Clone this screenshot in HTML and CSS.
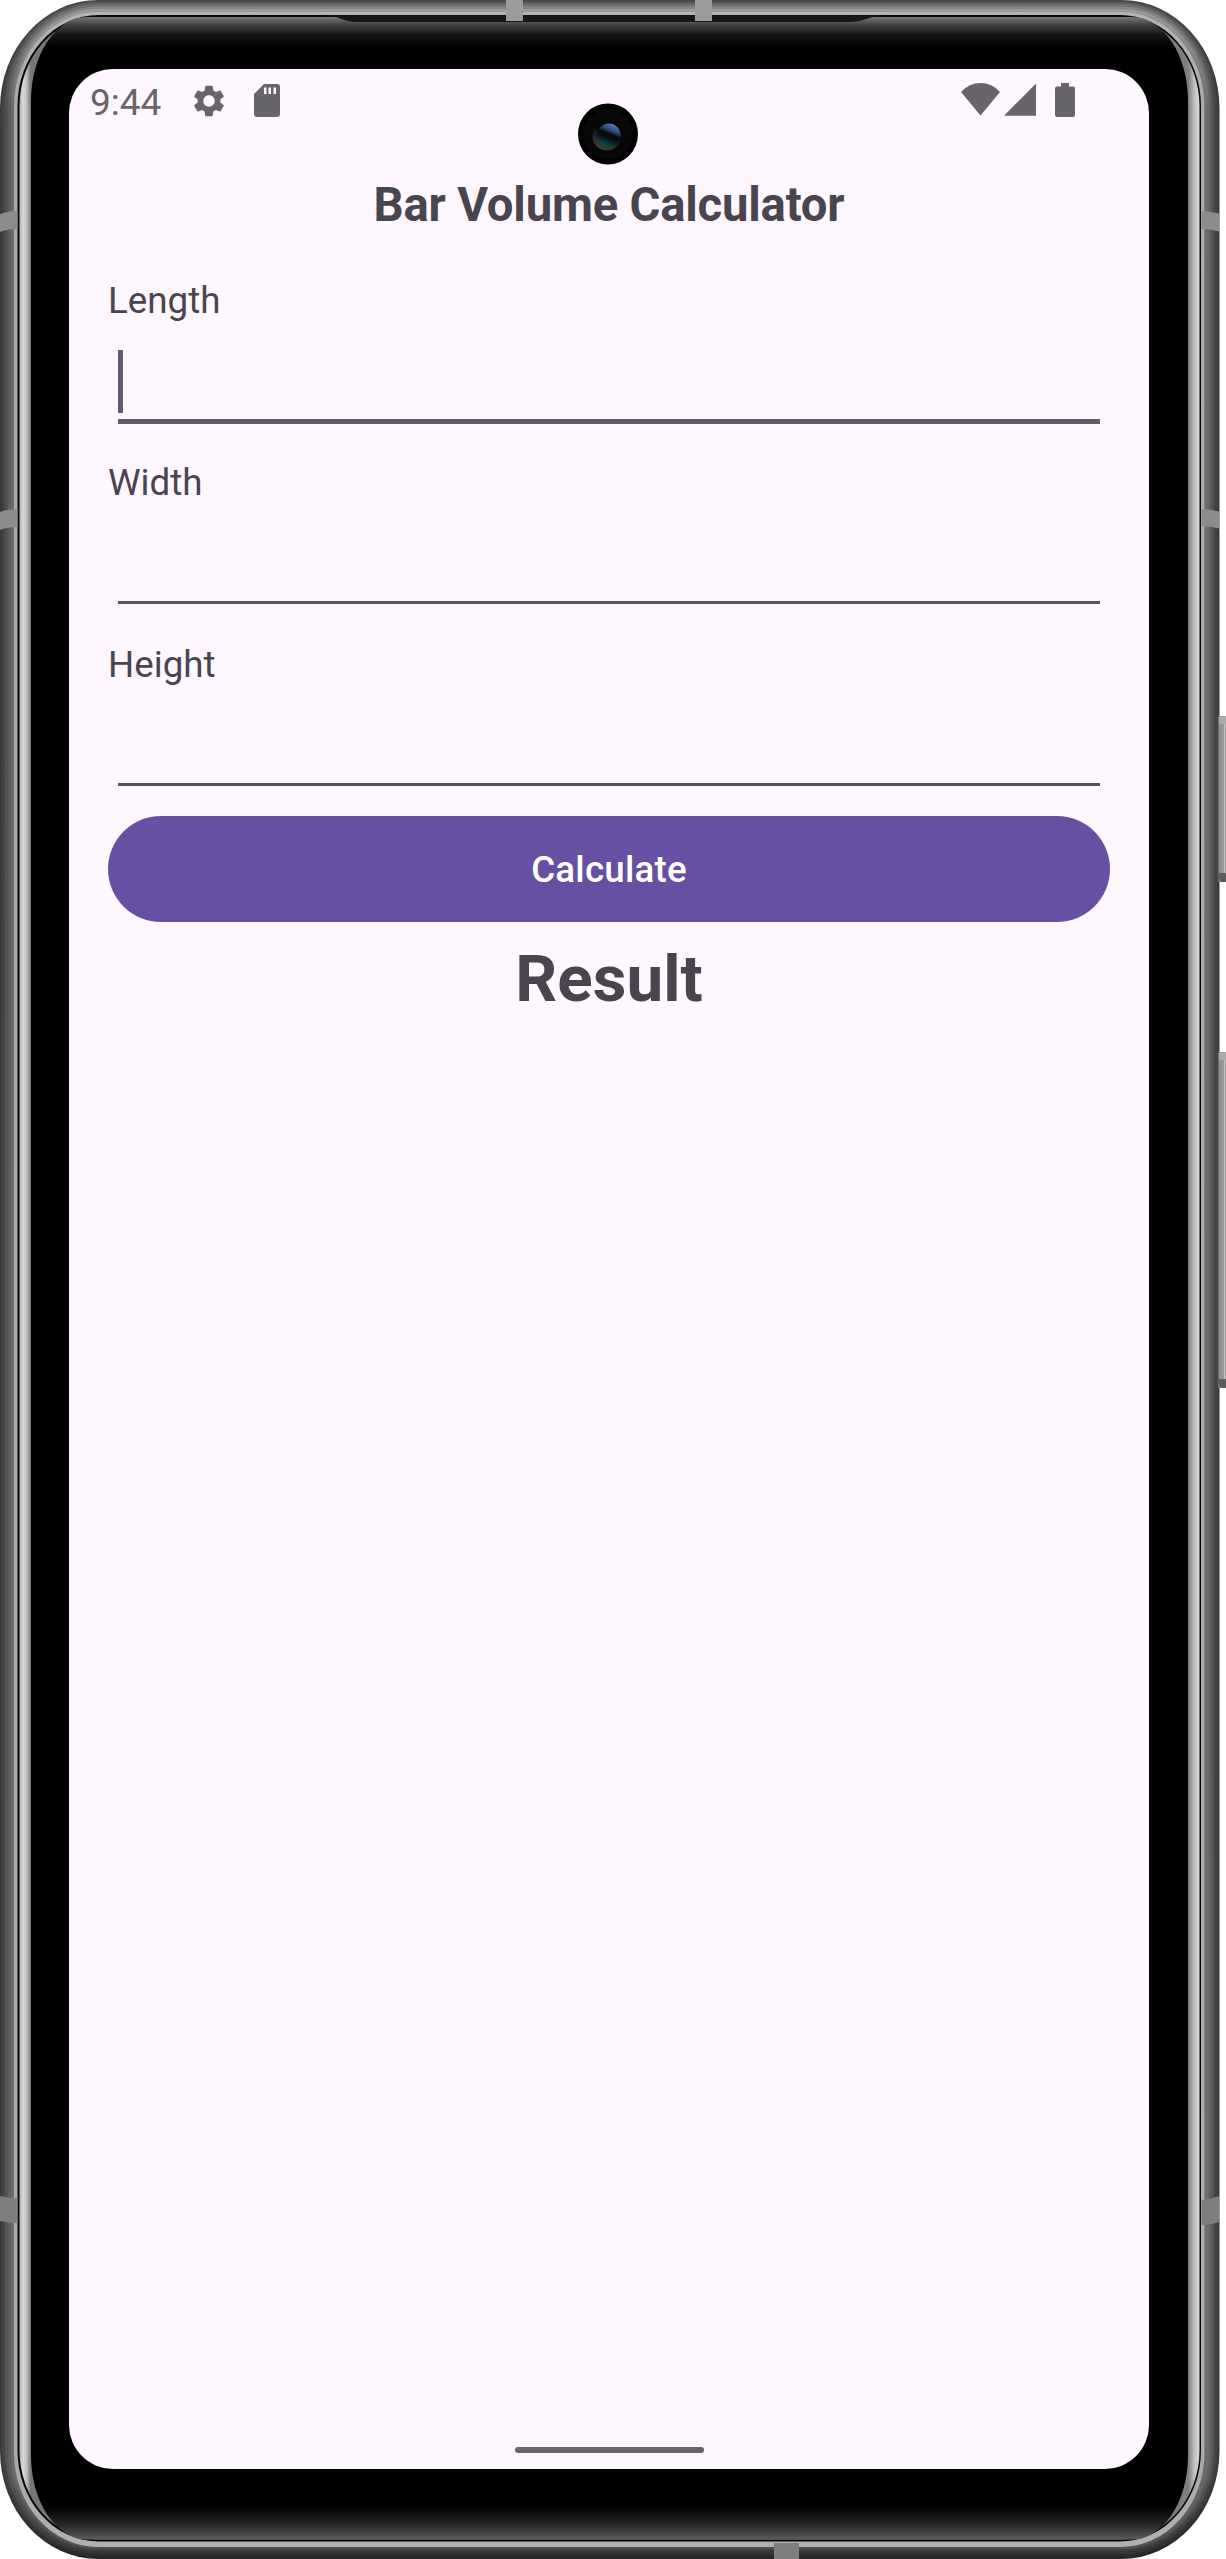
FILE: index.html
```html
<!DOCTYPE html>
<html lang="en">
<head>
<meta charset="utf-8">
<title>Bar Volume Calculator</title>
<link rel="stylesheet" href="styles.css">
</head>
<body>
<div class="device">
  <svg class="frame" width="1226" height="2559" viewBox="0 0 1226 2559" aria-hidden="true">
    <defs>
      <linearGradient id="r0" x2="0" y2="1"><stop offset="0" stop-color="#484848"/><stop offset=".04" stop-color="#3a3a3a"/><stop offset=".97" stop-color="#3a3a3a"/><stop offset="1" stop-color="#262626"/></linearGradient>
      <linearGradient id="r1" x2="0" y2="1"><stop offset="0" stop-color="#5c5c5c"/><stop offset=".04" stop-color="#444"/><stop offset=".97" stop-color="#444"/><stop offset="1" stop-color="#2c2c2c"/></linearGradient>
      <linearGradient id="r2" x2="0" y2="1"><stop offset="0" stop-color="#707070"/><stop offset=".04" stop-color="#505050"/><stop offset=".97" stop-color="#555"/><stop offset="1" stop-color="#353535"/></linearGradient>
      <linearGradient id="r3" x2="0" y2="1"><stop offset="0" stop-color="#858585"/><stop offset=".04" stop-color="#5e5e5e"/><stop offset=".97" stop-color="#606060"/><stop offset="1" stop-color="#404040"/></linearGradient>
      <linearGradient id="r4" x2="0" y2="1"><stop offset="0" stop-color="#9a9a9a"/><stop offset=".04" stop-color="#6a6a6a"/><stop offset=".97" stop-color="#6c6c6c"/><stop offset="1" stop-color="#505050"/></linearGradient>
      <linearGradient id="r5" x2="0" y2="1"><stop offset="0" stop-color="#b4b4b4"/><stop offset=".04" stop-color="#a8a8a8"/><stop offset=".97" stop-color="#aaa"/><stop offset="1" stop-color="#b0b0b0"/></linearGradient>
      <linearGradient id="band"><stop offset="0" stop-color="#b0b0b0"/><stop offset=".003" stop-color="#dadada"/><stop offset=".006" stop-color="#c0c0c0"/><stop offset=".0095" stop-color="#777"/><stop offset=".03" stop-color="#777"/><stop offset=".97" stop-color="#777"/><stop offset=".9905" stop-color="#808080"/><stop offset=".996" stop-color="#c4c4c4"/><stop offset="1" stop-color="#d8d8d8"/></linearGradient>
      <linearGradient id="glass" x2="0" y2="1"><stop offset="0" stop-color="#777"/><stop offset=".003" stop-color="#444"/><stop offset=".007" stop-color="#161616"/><stop offset=".012" stop-color="#000"/><stop offset=".987" stop-color="#000"/><stop offset=".994" stop-color="#262626"/><stop offset="1" stop-color="#5c5c5c"/></linearGradient>
      <linearGradient id="key"><stop offset="0" stop-color="#333"/><stop offset=".25" stop-color="#8c8c8c"/><stop offset=".75" stop-color="#999"/><stop offset=".85" stop-color="#ccc"/><stop offset="1" stop-color="#777"/></linearGradient>
    </defs>
    <rect width="1219.5" height="2559" rx="98" ry="108" fill="url(#r0)"/>
    <rect x="2" y="2" width="1215" height="2554.500" rx="96" ry="106" fill="url(#r1)"/>
    <rect x="5" y="4" width="1209" height="2550" rx="93" ry="103" fill="url(#r2)"/>
    <rect x="8" y="6.500" width="1203.500" height="2544.500" rx="90" ry="100" fill="url(#r3)"/>
    <rect x="11" y="9" width="1198" height="2540" rx="87" ry="97" fill="url(#r4)"/>
    <rect x="14" y="12" width="1190.500" height="2535" rx="84" ry="94" fill="url(#r5)"/>
    <rect x="17.500" y="15" width="1183.500" height="2526.500" rx="81" ry="91" fill="#080808"/>
    <rect x="19.500" y="17" width="1180" height="2522.500" rx="79" ry="89" fill="url(#band)"/>
    <rect x="31" y="17" width="1157" height="2522.500" rx="56" ry="84" fill="url(#glass)"/>
    <path d="M326 15.500h558c-14 0-20 6.500-34 6.500H356c-12 0-18-6.500-30-6.500z" fill="#161616"/>
    <g fill="#8c8c8c">
      <path d="M506 0h17v21h-17zM695 0h17v21h-17z" fill="#9c9c9c"/>
      <path d="M0 214q8-3 17.500-3v18q-10 0-17.500 3zM0 512q8-3 17.500-3v18q-10 0-17.500 3zM1201.500 211q9 0 17.500 2.500v18q-8-2.500-17.500-2.500zM1201.500 509q9 0 17.500 2.500v17q-8-2.500-17.500-2.500z"/>
      <path d="M0 2196q8 2 17.500 2v25q-10 0-17.500-2zM1201.500 2200q9-.5 17.500-4v26q-8 3-17.500 3zM774 2543h25v16h-25z" fill="#7e7e7e"/>
    </g>
    <rect x="1217" y="716" width="9" height="166" fill="url(#key)"/>
    <rect x="1217" y="1052" width="9" height="336" fill="url(#key)"/>
    <path d="M1219 717h7v7h-7zM1219 1053h7v7h-7z" fill="#aaa"/>
    <path d="M1217 873h9v9h-6zM1217 1379h9v9h-6z" fill="#5c5c5c"/>
  </svg>
  <main class="screen">
    <header class="status">
      <span class="time">9:44</span>
      <svg class="gear" width="38" height="38" viewBox="0 0 24 24"><path d="M19.140 12.940c.04-.3.060-.61.060-.94 0-.32-.02-.64-.07-.94l2.030-1.580c.18-.14.230-.41.120-.61l-1.920-3.320c-.12-.22-.37-.29-.59-.22l-2.390.96c-.5-.38-1.030-.7-1.620-.94l-.36-2.540c-.04-.24-.24-.41-.48-.41h-3.840c-.24 0-.43.17-.47.41l-.36 2.540c-.59.24-1.130.57-1.620.94l-2.390-.96c-.22-.08-.47 0-.59.22L2.740 8.870c-.12.210-.08.470.12.610l2.030 1.580c-.05.3-.09.630-.09.940s.02.640.07.940l-2.030 1.580c-.18.140-.23.410-.12.610l1.920 3.320c.12.220.37.290.59.220l2.390-.96c.5.380 1.030.7 1.620.94l.36 2.540c.05.240.24.410.48.410h3.840c.24 0 .44-.17.470-.41l.36-2.540c.59-.24 1.130-.56 1.620-.94l2.390.96c.22.080.47 0 .59-.22l1.920-3.320c.12-.22.070-.47-.12-.61l-2.010-1.580zM12 15.600c-1.980 0-3.600-1.620-3.600-3.600s1.620-3.600 3.600-3.600 3.600 1.620 3.600 3.600-1.620 3.600-3.600 3.600z"/></svg>
      <svg class="card" width="26" height="33" viewBox="0 0 26 33"><path fill-rule="evenodd" d="M10 0h13a3 3 0 0 1 3 3v27a3 3 0 0 1-3 3H3a3 3 0 0 1-3-3V10zM10 3.500v6.500h2.500V3.500zM14.500 3.500v6.500H17V3.500zM19.500 3.500v6.500H22V3.500z"/></svg>
      <svg class="signal" width="115" height="34" viewBox="0 0 115 34"><path d="M0 9Q8 0 19.500 0T39 9L19.500 32.500zM43 32.700L75 .5v32.200zM100 0h8v3.500h4a2 2 0 0 1 2 2V32a2 2 0 0 1-2 2H96a2 2 0 0 1-2-2V5.500a2 2 0 0 1 2-2h4z"/></svg>
    </header>
    <svg class="camera" width="60" height="62" viewBox="0 0 60 62" aria-hidden="true">
      <defs>
        <linearGradient id="lens" x1=".75" y1=".05" x2=".35" y2="1"><stop offset="0" stop-color="#6474b8"/><stop offset=".28" stop-color="#2c4a78"/><stop offset=".46" stop-color="#03060a"/><stop offset=".65" stop-color="#061214"/><stop offset="1" stop-color="#0a5450"/></linearGradient>
        <linearGradient id="rim" x1=".8" y1="0" x2=".3" y2="1"><stop offset=".4" stop-color="#060606"/><stop offset="1" stop-color="#444"/></linearGradient>
      </defs>
      <ellipse cx="30" cy="31" rx="30" ry="30.500"/>
      <circle cx="30" cy="31" r="25" fill="#080808"/>
      <circle cx="29" cy="33" r="14.500" fill="url(#rim)"/>
      <circle cx="31" cy="32" r="11.500" fill="url(#lens)"/>
    </svg>
    <form class="form">
      <h1 class="title">Bar Volume Calculator</h1>
      <label class="label">Length</label>
      <div class="field focused"><span class="caret"></span></div>
      <label class="label">Width</label>
      <div class="field"></div>
      <label class="label">Height</label>
      <div class="field"></div>
      <button class="calculate" type="button">Calculate</button>
      <output class="result">Result</output>
    </form>
    <div class="home"></div>
  </main>
</div>
</body>
</html>
```

FILE: styles.css
```css
* { box-sizing: border-box; }
body { margin: 0; background: #fff; font-family: Roboto, sans-serif; color: #49454f; }
.device { position: relative; width: 1226px; height: 2559px; padding: 69px 0 0 69px; overflow: hidden; }
.frame { position: absolute; left: 0; top: 0; }
.screen { position: relative; display: flex; flex-direction: column; width: 1080px; height: 2400px; border-radius: 44px; background: #fef7ff; overflow: hidden; }
.status { display: flex; align-items: flex-start; height: 105px; padding: 14px 73px 0 21px; color: #67646a; fill: #67646a; }
.time { width: 100px; margin-top: -2px; font-size: 37px; line-height: 43px; }
.gear { margin-top: -1px; }
.card { margin: 1px 0 0 26px; }
.signal { margin-left: auto; }
.camera { position: absolute; left: 509px; top: 34px; }
.form { display: flex; flex-direction: column; flex: 1; padding: 0 39px; }
.title { margin: 0 0 39px; text-align: center; font-size: 47.25px; line-height: 62px; font-weight: 700; letter-spacing: -0.2px; }
.label { padding-top: 2px; font-size: 36.75px; line-height: 48px; }
.field { display: flex; align-items: flex-start; height: 97px; margin: 0 10px 35px; border-bottom: 3px solid #57535c; }
.field.focused { height: 99px; margin-bottom: 33px; border-bottom: 5px solid #625b71; }
.caret { width: 5px; height: 63px; margin-top: 25px; background: #625b71; }
.calculate { height: 106px; margin-top: -5px; padding: 2px 0 0; border: 0; border-radius: 53px; background: #6750a4; color: #fff; font: 500 36.75px/104px Roboto, sans-serif; letter-spacing: 0.2px; }
.result { margin-top: 18px; text-align: center; font-size: 65.6px; line-height: 77px; font-weight: 700; }
.home { width: 189px; height: 6px; margin: 0 auto 16px; border-radius: 3px; background: #67646a; }
```
